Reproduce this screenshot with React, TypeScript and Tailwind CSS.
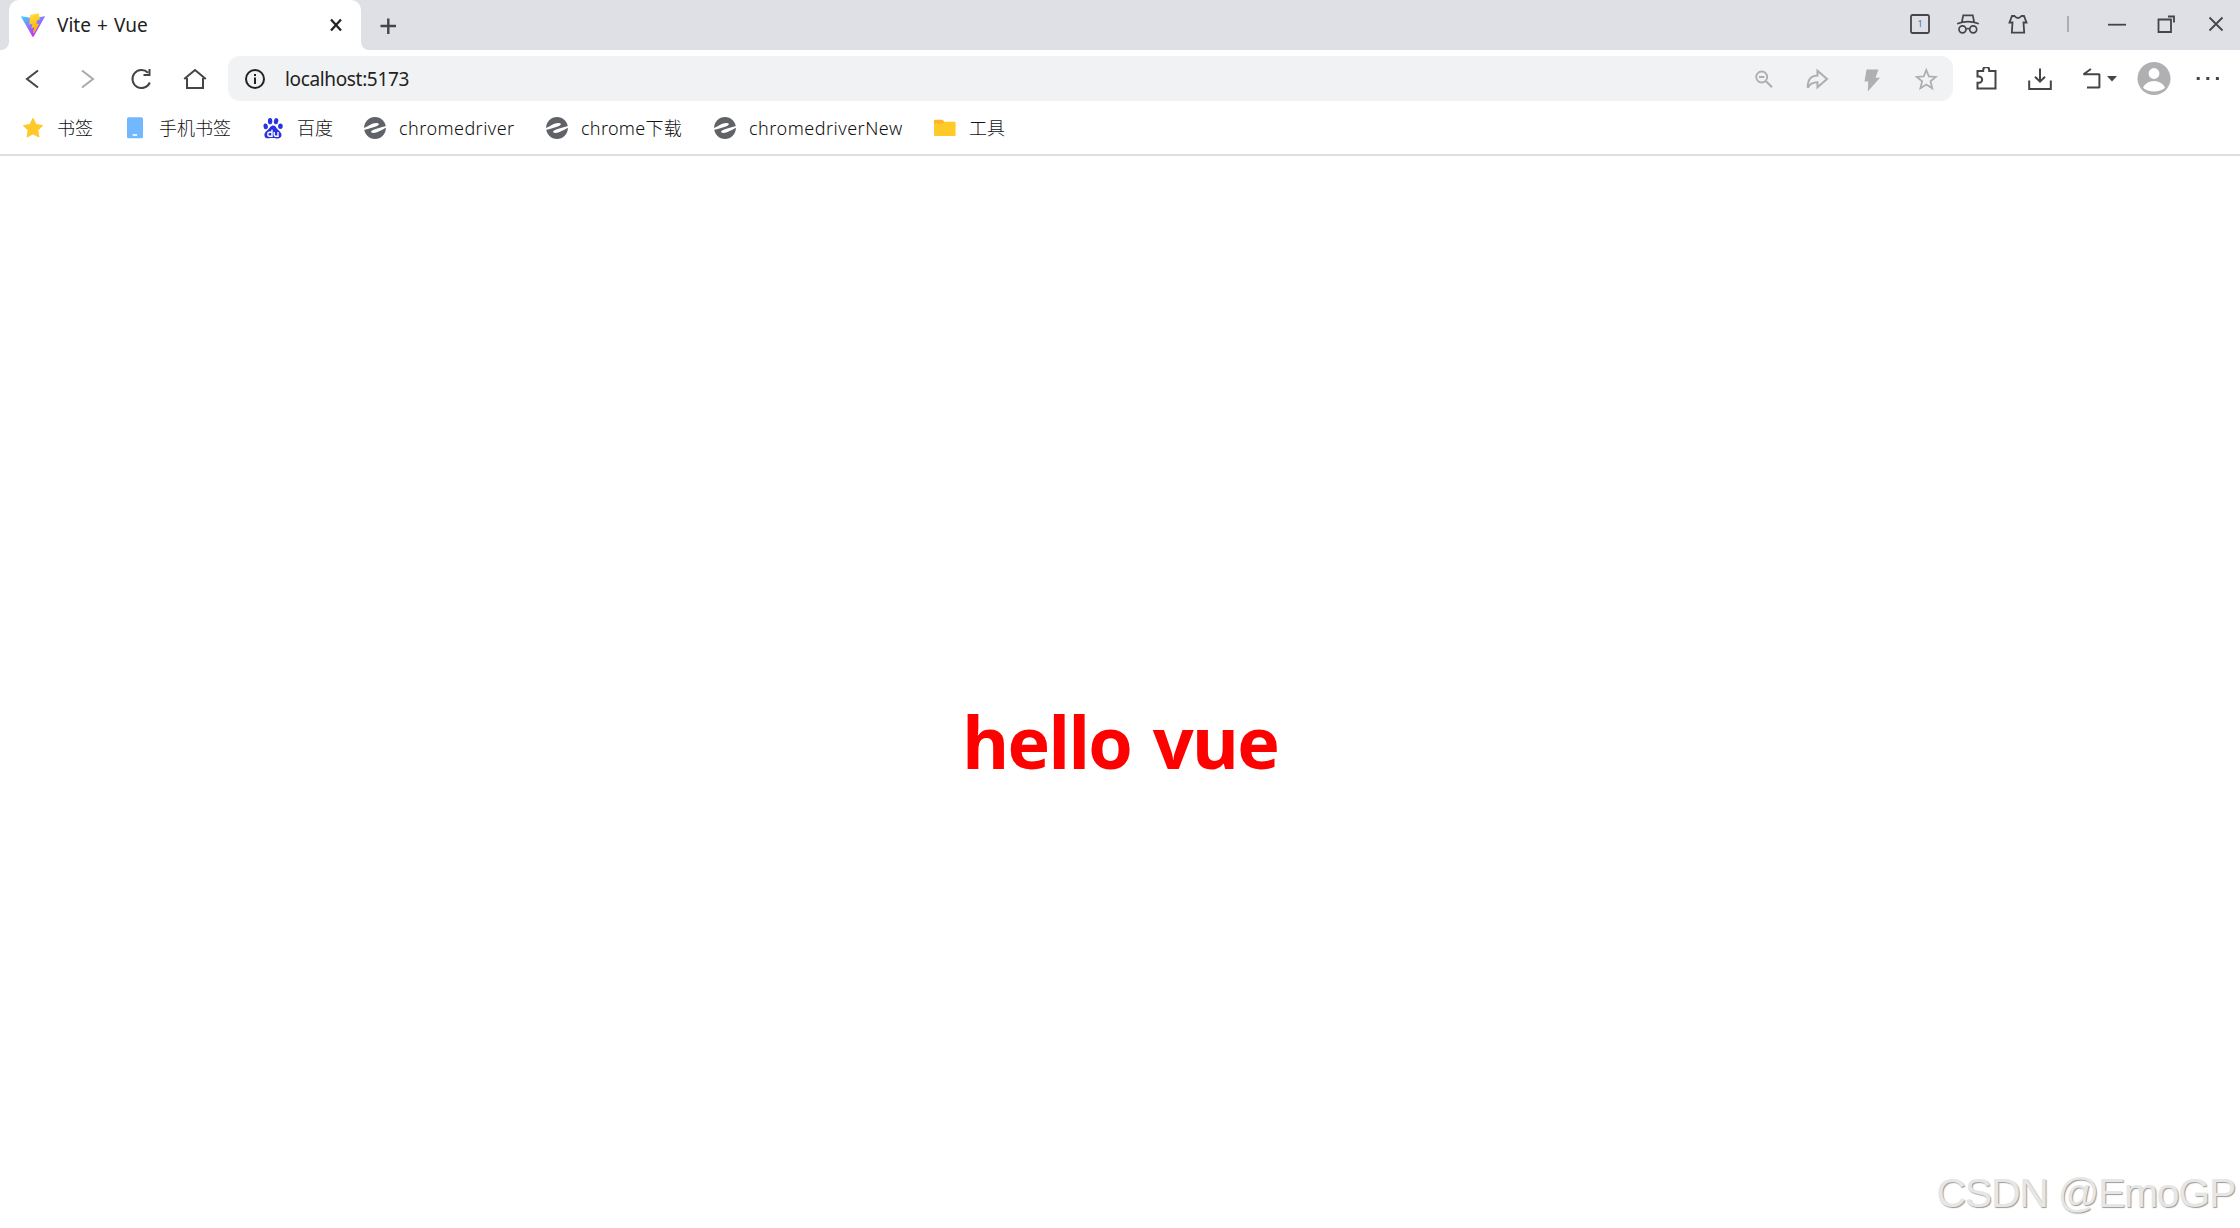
import type { ReactNode } from "react";

function Icon({ className = "", children }: { className?: string; children: ReactNode }) {
  return (
    <svg
      viewBox="0 0 24 24"
      className={`size-6 shrink-0 fill-none stroke-2 ${className.includes("stroke-") ? "" : "stroke-[#444548]"} ${className}`}
    >
      {children}
    </svg>
  );
}

function ViteLogo() {
  return (
    <svg viewBox="0 0 24 24" className="size-6 shrink-0">
      <defs>
        <linearGradient id="shield" x1="0" y1="0" x2="0.55" y2="0.9">
          <stop offset="0" stopColor="#41d1ff" />
          <stop offset="1" stopColor="#bd34fe" />
        </linearGradient>
        <linearGradient id="bolt" x1="0.4" y1="0" x2="0.6" y2="1">
          <stop offset="0" stopColor="#ffdf3a" />
          <stop offset="1" stopColor="#ffa800" />
        </linearGradient>
      </defs>
      <path d="M0.6 3.2 12 5.2 23.5 3.2Q24.2 3.2 23.8 4L12.6 23.6Q12 24.4 11.4 23.6L0.2 4Q0 3.2 0.6 3.2Z" fill="url(#shield)" />
      <path d="M17.6 0.3 9 2 8.3 11.5 11.3 11 10.4 15.2 13.3 14.3 12 20 13.3 20 18.2 10.5 15.2 11 16.4 7 19 6.5Z" fill="url(#bolt)" />
    </svg>
  );
}

function StarIcon() {
  return (
    <Icon>
      <path
        d="M12 2.5 14.9 8.6 21.3 9.5 16.7 14.1 17.8 20.8 12 17.7 6.2 20.8 7.3 14.1 2.7 9.5 9.1 8.6Z"
        fill="#ffca28"
        stroke="#ffca28"
        strokeWidth="1.2"
        strokeLinejoin="round"
      />
    </Icon>
  );
}

function PhoneIcon() {
  return (
    <Icon>
      <rect x="4" y="1.2" width="16" height="21" rx="1.5" fill="#72b8ff" stroke="none" />
      <path d="M9.7 19h4.4" stroke="#fff" strokeWidth="1.6" />
    </Icon>
  );
}

function BaiduIcon() {
  return (
    <Icon>
      <g fill="#2932e1" stroke="none">
        <ellipse cx="4.7" cy="10.4" rx="2.2" ry="2.9" transform="rotate(-8 4.7 10.4)" />
        <ellipse cx="9.1" cy="5.2" rx="2.2" ry="3.1" />
        <ellipse cx="15.1" cy="5.2" rx="2.2" ry="3.1" transform="rotate(10 15.1 5.2)" />
        <ellipse cx="19.4" cy="10.3" rx="2.3" ry="2.7" />
        <path d="M12 9.5C9.5 9.5 9 12 7 13.7 4.5 15.6 3.2 17 3.4 19.2 3.6 21.8 5.4 22.6 8 22.3 10.5 22 13 22 15.5 22.4 18.6 22.7 20.5 21.4 20.5 19 20.5 16.6 18.8 15.5 17 13.7 15 11.7 14.5 9.5 12 9.5Z" />
      </g>
      <path d="M11 13.8V20.2H8.5Q6.8 20.2 6.8 18.2T8.5 16.3H11M13.2 16v2.8Q13.2 20.2 14.5 20.2H17V16" stroke="#fff" strokeWidth="1.4" />
    </Icon>
  );
}

function SwirlIcon() {
  return (
    <Icon>
      <circle cx="12" cy="12" r="10.9" fill="#5f6368" stroke="none" />
      <g fill="#fff" stroke="none">
        <path d="M0.5 12.2C5 10.8 8.5 7 13.8 7.1 16.8 7.3 16.4 9.2 13.5 10.2 9.5 11.7 5 12.9 0.5 14Z" />
        <path d="M23.5 11.8C19 13.2 15.5 17 10.2 16.9 7.2 16.7 7.6 14.8 10.5 13.8 14.5 12.3 19 11.1 23.5 10Z" />
      </g>
    </Icon>
  );
}

function FolderIcon() {
  return (
    <Icon>
      <path d="M1 4.6Q1 3.8 1.8 3.8H9.6L12 6.5H21V18H1Z" fill="#ffb52b" stroke="none" />
      <path d="M1 7.4H10L12 5.8H21.6Q22.6 5.8 22.6 6.8V19Q22.6 20 21.6 20H2Q1 20 1 19Z" fill="#ffca28" stroke="none" />
    </Icon>
  );
}

const bookmarks = [
  { label: "书签", icon: <StarIcon />, box: "w-[102px]" },
  { label: "手机书签", icon: <PhoneIcon />, box: "w-[138px]" },
  { label: "百度", icon: <BaiduIcon />, box: "w-[102px]" },
  { label: "chromedriver", icon: <SwirlIcon />, box: "w-[182px] tracking-[0.45px]" },
  { label: "chrome下载", icon: <SwirlIcon />, box: "w-[168px] tracking-[0.3px]" },
  { label: "chromedriverNew", icon: <SwirlIcon />, box: "w-[220px] tracking-[0.5px]" },
  { label: "工具", icon: <FolderIcon />, box: "w-[102px]" },
];

function TabStrip() {
  return (
    <div className="flex h-[50px] bg-white">
      <div className="w-[9px] rounded-br-lg bg-[#dfe0e5]" />
      <div className="w-[352px] shrink-0 bg-[#dfe0e5]">
        <div className="flex h-full items-center rounded-t-[10px] bg-white pl-3">
          <ViteLogo />
          <span className="ml-3 w-[267px] shrink-0 whitespace-nowrap pt-px text-[19px] text-[#222] [word-spacing:1.2px]">Vite + Vue</span>
          <Icon className="stroke-[#222]">
            <path d="M7 6.5 17 17.5M17 6.5 7 17.5" strokeWidth="2.3" />
          </Icon>
        </div>
      </div>
      <div className="flex flex-1 items-center rounded-bl-lg bg-[#dfe0e5] pl-[15px]">
        <Icon>
          <path d="M4.5 13H20M12.3 5.5V21" strokeWidth="2.4" />
        </Icon>
        <div className="flex-1" />
        <div className="flex items-center pb-0.5">
          <Icon className="mr-6">
            <rect x="3" y="3" width="18" height="18" rx="1.5" strokeWidth="1.8" />
            <text x="12" y="15" textAnchor="middle" fontSize="9" fill="#3476bd" stroke="none">1</text>
          </Icon>
          <Icon className="mr-[26px]">
            <path d="M5.9 10 7.2 3.3H16.8L18.1 10M1.2 11.8Q12 7.5 22.8 11.8" strokeWidth="1.7" />
            <circle cx="6.5" cy="17.3" r="3.5" strokeWidth="1.7" />
            <circle cx="17.2" cy="17.3" r="3.5" strokeWidth="1.7" />
            <path d="M10 17Q12 15.9 13.8 17" strokeWidth="1.5" />
          </Icon>
          <Icon className="mr-[26px]">
            <path d="M8.5 4Q12 8 15.5 4H18L20.5 10.5H17.5L18.2 20.7H5.8L6.5 10.5H3.5L6 4Z" strokeWidth="1.8" />
          </Icon>
          <Icon className="mr-[25px]">
            <path d="M12 4V20" stroke="#929397" strokeWidth="1.3" />
          </Icon>
          <Icon className="mr-[25px]">
            <path d="M3 12.7H21" strokeWidth="1.8" />
          </Icon>
          <Icon className="mr-[26px]">
            <path d="M4.5 7.5H17V20H4.5ZM14 4.5H20V10.5" strokeWidth="1.8" />
          </Icon>
          <Icon className="mr-3">
            <path d="M5.5 5.5 18.5 18.5M18.5 5.5 5.5 18.5" strokeWidth="1.8" />
          </Icon>
        </div>
      </div>
    </div>
  );
}

function Toolbar() {
  return (
    <div className="flex h-[57px] items-center pl-5">
      <Icon className="mr-[31px]">
        <path d="M18 3.5 7 12 18 20.5" />
      </Icon>
      <Icon className="mr-[30px]">
        <path d="M7 3.5 18 12 7 20.5" stroke="#a9a9aa" />
      </Icon>
      <Icon className="mr-[30px]">
        <path d="M19 5.8A9 9 0 1 0 20.8 15.5M20.5 2V8H14.5" />
      </Icon>
      <Icon className="mr-[21px]">
        <path d="M1.2 12 12 3 22.8 12M4 11V21H20V11" />
      </Icon>
      <div className="flex h-[45px] w-[1725px] items-center rounded-xl bg-[#f1f2f4] pl-[15px]">
        <Icon className="stroke-[#222]">
          <circle cx="12" cy="12" r="9" />
          <path d="M12 10.6V17M12 7V9" />
        </Icon>
        <span className="ml-[18px] pt-px text-[19px] tracking-[-0.35px] text-[#222]">localhost:5173</span>
        <div className="flex-1" />
        <Icon className="mr-[29px] stroke-[#aeaeb0]">
          <circle cx="9.7" cy="10" r="5.5" strokeWidth="1.8" />
          <path d="M14 14.2 20 20.3M7 10H12.4" />
        </Icon>
        <Icon className="mr-[31px] stroke-[#aeaeb0]">
          <path d="M2.8 20.8V17.5Q3.8 8.6 12.5 8.5V3.8L22 12 12.5 20.3V15.2Q5.5 15.2 2.8 20.8Z" />
        </Icon>
        <Icon className="mr-[30px] stroke-none">
          <path d="M6.5 2.5H18.5L15.5 10.8H20L7.8 24.5 8.2 14.5H4.5Z" fill="#b0b0b2" />
        </Icon>
        <Icon className="mr-[15px] stroke-[#aeaeb0]">
          <path d="M12.3 3 14.9 9.5 21.8 9.9 16.5 14.4 18.2 21.3 12.3 17.6 6.4 21.3 8.1 14.4 2.8 9.9 9.7 9.5Z" strokeWidth="1.8" />
        </Icon>
      </div>
      <Icon className="ml-[21px] mr-[30px]">
        <path d="M3.5 4H9.2V3A3 3 0 0 1 15.2 3V4H21.5V21.5H3.5V15.8H5A3 3 0 0 0 5 9.5H3.5Z" />
      </Icon>
      <Icon className="mr-[29px]">
        <path d="M1.2 13.5V22H22.8V13.5M12 1.5V14.5M7 9.7 12 14.7 17 9.7" />
      </Icon>
      <Icon>
        <path d="M10 2 2.5 7.3H18.4V20.5H6" strokeLinejoin="bevel" />
      </Icon>
      <svg viewBox="0 0 10 6" className="ml-0.5 mr-5 h-1.5 w-2.5 fill-[#444548]">
        <path d="M0 0H10L5 5.5Z" />
      </svg>
      <svg viewBox="0 0 34 34" className="mr-[25px] size-[34px]">
        <circle cx="17" cy="16.5" r="16.5" fill="#b0b0b2" />
        <circle cx="17" cy="11.5" r="5.4" fill="#fff" />
        <path d="M6 25.7Q9.3 19.1 17 19.1T28 25.7Q23.5 29.5 17 29.5T6 25.7Z" fill="#fff" />
      </svg>
      <Icon className="stroke-none">
        <path d="M0.7 10h3v3h-3zM10.3 10h3v3h-3zM19.9 10h3v3h-3z" fill="#444548" />
      </Icon>
    </div>
  );
}

export default function App() {
  return (
    <div className="flex h-[1228px] w-[2240px] flex-col overflow-hidden bg-white font-['Noto_Sans','Noto_Sans_CJK_SC',sans-serif]">
      <TabStrip />
      <Toolbar />
      <div className="flex h-[49px] items-center border-b-2 border-[#dedfe1] pb-[5px] pl-[21px]">
        {bookmarks.map(({ label, icon, box }) => (
          <div key={label} className={`flex shrink-0 items-center gap-3 whitespace-nowrap ${box}`}>
            {icon}
            <span className="text-[18px] font-light leading-6 text-[#111]">{label}</span>
          </div>
        ))}
      </div>
      <main className="flex flex-1 flex-col items-center justify-between pt-[536px]">
        <h1 className="font-['Open_Sans',sans-serif] text-[72px] font-bold leading-[98px] tracking-[-1.9px] text-[#ff0000] [word-spacing:5px]">hello vue</h1>
        <div className="self-end pb-[11px] pr-[5px] font-['Liberation_Sans',sans-serif] text-[41px] leading-[48px] tracking-[-1.3px] text-[#e6e6e6] [text-shadow:1px_1px_1px_#999]">
          CSDN @EmoGP
        </div>
      </main>
    </div>
  );
}
